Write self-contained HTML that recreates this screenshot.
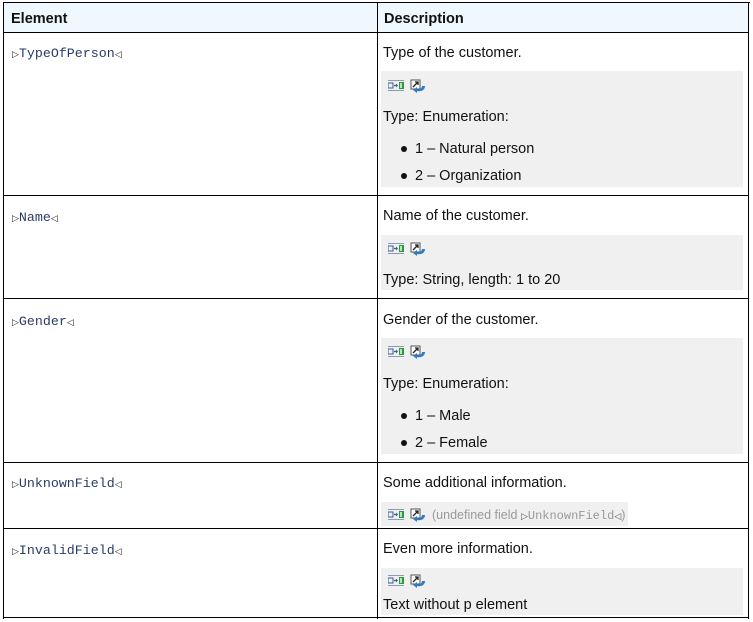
<!DOCTYPE html>
<html><head><meta charset="utf-8"><style>
*{margin:0;padding:0;box-sizing:border-box}
body{width:753px;height:622px;background:#fff;position:relative;overflow:hidden;font-family:"Liberation Sans",sans-serif;font-size:14.5px;color:#111}
.a{position:absolute;white-space:nowrap}
div.a{padding-top:1px}
.line{position:absolute;background:#000}
.mono{font-family:"Liberation Mono",monospace;font-size:13.3px;color:#2a3b6a}
.tri{font-size:9px;color:#222;font-family:"DejaVu Sans",sans-serif}
.box{position:absolute;background:#f0f0f0}
.b{font-weight:bold}
.dot{position:absolute;width:6px;height:6px;border-radius:3px;background:#111}
</style></head><body>
<div class="a" style="left:4px;top:2px;width:745px;height:30px;background:#eef8fe"></div>
<div class="line" style="left:3px;top:2px;width:747px;height:1px"></div>
<div class="line" style="left:3px;top:2px;width:1px;height:617px"></div>
<div class="line" style="left:748px;top:2px;width:1px;height:617px"></div>
<div class="line" style="left:377px;top:2px;width:1px;height:617px"></div>
<div class="line" style="left:3px;top:32px;width:746px;height:1px"></div>
<div class="line" style="left:3px;top:195px;width:746px;height:1px"></div>
<div class="line" style="left:3px;top:298px;width:746px;height:1px"></div>
<div class="line" style="left:3px;top:462px;width:746px;height:1px"></div>
<div class="line" style="left:3px;top:528px;width:746px;height:1px"></div>
<div class="line" style="left:3px;top:617px;width:746px;height:1px"></div>

<div class="a b" style="left:11px;top:10px">Element</div>
<div class="a b" style="left:384px;top:10px">Description</div>

<div class="box" style="left:381px;top:71px;width:362px;height:116px"></div>
<div class="box" style="left:381px;top:235px;width:362px;height:55px"></div>
<div class="box" style="left:381px;top:338px;width:362px;height:116px"></div>
<div class="box" style="left:381px;top:502px;width:247px;height:24px"></div>
<div class="box" style="left:381px;top:568px;width:362px;height:47px"></div>

<div class="a" style="left:12px;top:44px"><span class="tri">▷</span><span class="mono">TypeOfPerson</span><span class="tri">◁</span></div>
<div class="a" style="left:12px;top:208px"><span class="tri">▷</span><span class="mono">Name</span><span class="tri">◁</span></div>
<div class="a" style="left:12px;top:312px"><span class="tri">▷</span><span class="mono">Gender</span><span class="tri">◁</span></div>
<div class="a" style="left:12px;top:474px"><span class="tri">▷</span><span class="mono">UnknownField</span><span class="tri">◁</span></div>
<div class="a" style="left:12px;top:541px"><span class="tri">▷</span><span class="mono">InvalidField</span><span class="tri">◁</span></div>

<div class="a" style="left:383px;top:44px">Type of the customer.</div>
<div class="a" style="left:383px;top:108px">Type: Enumeration:</div>
<div class="dot" style="left:401px;top:146px"></div><div class="a" style="left:415px;top:140px">1 – Natural person</div>
<div class="dot" style="left:401px;top:173px"></div><div class="a" style="left:415px;top:167px">2 – Organization</div>

<div class="a" style="left:383px;top:207px">Name of the customer.</div>
<div class="a" style="left:383px;top:271px">Type: String, length: 1 to 20</div>

<div class="a" style="left:383px;top:311px">Gender of the customer.</div>
<div class="a" style="left:383px;top:375px">Type: Enumeration:</div>
<div class="dot" style="left:401px;top:413px"></div><div class="a" style="left:415px;top:407px">1 – Male</div>
<div class="dot" style="left:401px;top:440px"></div><div class="a" style="left:415px;top:434px">2 – Female</div>

<div class="a" style="left:383px;top:474px">Some additional information.</div>
<div class="a" style="left:432px;top:507px;font-size:12.5px;color:#999">(undefined field <span class="tri" style="color:#555">▷</span><span class="mono" style="color:#999;font-size:12px">UnknownField</span><span class="tri" style="color:#555">◁</span>)</div>

<div class="a" style="left:383px;top:540px">Even more information.</div>
<div class="a" style="left:383px;top:596px">Text without p element</div>

<svg width="0" height="0" style="position:absolute"><defs>
<g id="i1"><rect x="0" y="1" width="16" height="1" fill="#8a9ab8"/><rect x="0" y="11" width="16" height="1" fill="#8a9ab8"/><rect x="0" y="4" width="5" height="5" fill="none" stroke="#3a5a9a"/><path d="M6 6.5h3" stroke="#3a5a9a" stroke-width="1.3"/><path d="M8 4.5l2 2-2 2z" fill="#3a5a9a"/><rect x="11" y="3" width="5" height="7" fill="#2c9a3a"/><rect x="12" y="4" width="2" height="5" fill="#b8e6b8"/></g>
<g id="i2"><rect x="1" y="1" width="9" height="9" fill="#fff" stroke="#555"/><path d="M3 8l5-5M5 3h3v3" stroke="#222" stroke-width="1.3" fill="none"/><path d="M15 7c0 4-4 6-8 5l0 2-4-3 4-3v2c3 1 5-1 5-3z" fill="#2f7cc4"/></g>
</defs></svg>
<svg class="a" style="left:388px;top:79px" width="40" height="15"><use href="#i1"/><use href="#i2" x="22"/></svg>
<svg class="a" style="left:388px;top:242px" width="40" height="15"><use href="#i1"/><use href="#i2" x="22"/></svg>
<svg class="a" style="left:388px;top:345px" width="40" height="15"><use href="#i1"/><use href="#i2" x="22"/></svg>
<svg class="a" style="left:388px;top:508px" width="40" height="15"><use href="#i1"/><use href="#i2" x="22"/></svg>
<svg class="a" style="left:388px;top:574px" width="40" height="15"><use href="#i1"/><use href="#i2" x="22"/></svg>
</body></html>
